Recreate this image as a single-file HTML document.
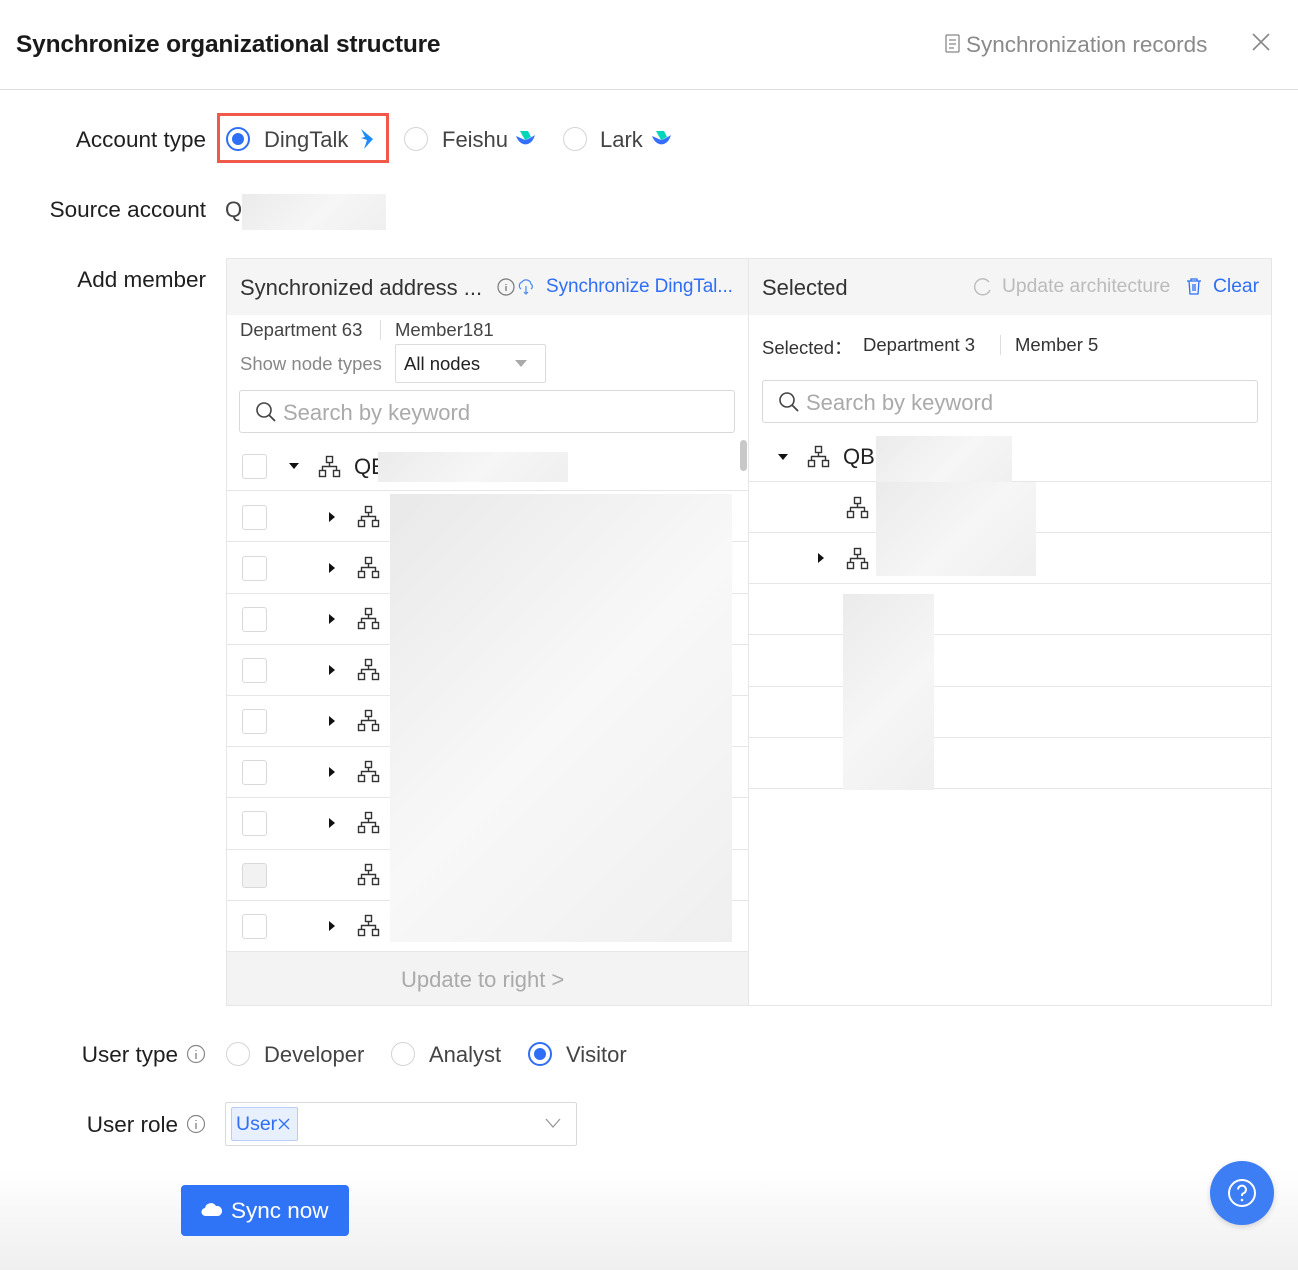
<!DOCTYPE html>
<html><head><meta charset="utf-8"><style>
*{box-sizing:border-box;margin:0;padding:0}
body{width:1298px;height:1270px;position:relative;background:#fff;font-family:"Liberation Sans",Arial,sans-serif;color:#262626;overflow:hidden}
.a{position:absolute;white-space:nowrap}
.lbl{font-size:22.5px;color:#1f1f1f;text-align:right}
.radio{position:absolute;width:24px;height:24px;border:1px solid #d4d4d4;border-radius:50%;background:#fff}
.radio.on{border:2px solid #2f6ff5}
.radio.on::after{content:"";position:absolute;left:4px;top:4px;width:12px;height:12px;border-radius:50%;background:#2f6ff5}
.cb{position:absolute;width:25px;height:25px;border:1px solid #d9d9d9;border-radius:3px;background:#fff}
.hl{position:absolute;height:1px;background:#e6e6e6}
.tri{position:absolute;width:0;height:0;border-left:6px solid #111;border-top:5px solid transparent;border-bottom:5px solid transparent}
.trid{position:absolute;width:0;height:0;border-top:6px solid #111;border-left:5px solid transparent;border-right:5px solid transparent}
.blur{position:absolute;background:linear-gradient(135deg,#ebebeb,#f6f6f6 55%,#efefef)}
</style></head><body>
<div class="a" style="left:16px;top:31px;font-size:24.5px;font-weight:bold;color:#1a1a1a;letter-spacing:-0.2px">Synchronize organizational structure</div>
<svg class="a" style="left:944px;top:34px" width="18" height="20" viewBox="0 0 18 20"><rect x="2" y="1" width="13" height="17" rx="1" fill="none" stroke="#888" stroke-width="1.3"/><path d="M5 6h7M5 10h7M5 14h5" stroke="#888" stroke-width="1.3"/></svg>
<div class="a" style="left:966px;top:32px;font-size:22.5px;color:#8a8a8a">Synchronization records</div>
<svg class="a" style="left:1252px;top:33px" width="18" height="18"><path d="M1 1L17 17M17 1L1 17" stroke="#888" stroke-width="1.6"/></svg>
<div class="hl" style="left:0;top:89px;width:1298px;background:#dedede"></div>

<div class="a lbl" style="right:1092px;top:127px">Account type</div>
<div class="a" style="left:217px;top:113px;width:172px;height:50px;border:3px solid #f0584a"></div>
<div class="radio on" style="left:226px;top:127px"></div>
<div class="a" style="left:264px;top:127px;font-size:22px;color:#444">DingTalk</div>
<svg class="a" style="left:359px;top:128px" width="16" height="22" viewBox="0 0 16 22"><path d="M2 1L14 11L5 21L8 12L2 10L6 9Z" fill="#1d8cf8"/></svg>
<div class="radio" style="left:404px;top:127px"></div>
<div class="a" style="left:442px;top:127px;font-size:22px;color:#444">Feishu</div>
<svg class="a" style="left:514px;top:130px" width="22" height="18" viewBox="0 0 22 18"><path d="M2 6Q6 16 14 14Q19 12 21 5Q15 9 11 10Z" fill="#3370ff"/><path d="M6 1H14L17 7Q13 9 11 10Z" fill="#00d6b9"/></svg>
<div class="radio" style="left:563px;top:127px"></div>
<div class="a" style="left:600px;top:127px;font-size:22px;color:#444">Lark</div>
<svg class="a" style="left:650px;top:130px" width="22" height="18" viewBox="0 0 22 18"><path d="M2 6Q6 16 14 14Q19 12 21 5Q15 9 11 10Z" fill="#3370ff"/><path d="M6 1H14L17 7Q13 9 11 10Z" fill="#00d6b9"/></svg>

<div class="a lbl" style="right:1092px;top:197px">Source account</div>
<div class="a" style="left:225px;top:197px;font-size:22px;color:#444">Q</div>
<div class="blur" style="left:242px;top:194px;width:144px;height:36px"></div>

<div class="a lbl" style="right:1092px;top:267px">Add member</div>

<div class="a" style="left:226px;top:258px;width:523px;height:748px;border:1px solid #e6e6e6"></div>
<div class="a" style="left:227px;top:259px;width:521px;height:56px;background:#f5f5f5"></div>
<div class="a" style="left:240px;top:275px;font-size:22px;color:#333">Synchronized address ...</div>
<svg class="a" style="left:497px;top:277px" width="40" height="20"><circle cx="9" cy="10" r="8" fill="none" stroke="#777" stroke-width="1.2"/><path d="M9 7v1M9 9v5" stroke="#777" stroke-width="1.3"/><path d="M24 12a4 4 0 0 1 1-7a5 5 0 0 1 9 2a3 3 0 0 1 0 5M29 9v8M27 15l2 2 2-2" fill="none" stroke="#4a8af4" stroke-width="1.2"/></svg>
<div class="a" style="left:546px;top:276px;font-size:19px;color:#2f6ff5;letter-spacing:-0.1px">Synchronize DingTal...</div>
<div class="a" style="left:240px;top:319px;font-size:18.5px;color:#444">Department 63</div>
<div class="a" style="left:380px;top:320px;width:1px;height:20px;background:#ddd"></div>
<div class="a" style="left:395px;top:319px;font-size:18.5px;color:#444">Member181</div>
<div class="a" style="left:240px;top:353px;font-size:18.5px;color:#888">Show node types</div>
<div class="a" style="left:395px;top:344px;width:151px;height:39px;border:1px solid #dcdcdc;border-radius:2px"></div>
<div class="a" style="left:404px;top:353px;font-size:18.5px;color:#222">All nodes</div>
<div class="trid" style="left:515px;top:360px;border-top-color:#aaa;border-left-width:6px;border-right-width:6px;border-top-width:7px"></div>
<div class="a" style="left:239px;top:390px;width:496px;height:43px;border:1px solid #d9d9d9;border-radius:3px"></div>
<svg class="a" style="left:255px;top:401px" width="22" height="22"><circle cx="9" cy="9" r="7" fill="none" stroke="#444" stroke-width="1.6"/><path d="M14 14l6 6" stroke="#444" stroke-width="1.8"/></svg>
<div class="a" style="left:283px;top:400px;font-size:22px;color:#aaa">Search by keyword</div>
<div class="a" style="left:740px;top:440px;width:7px;height:31px;border-radius:4px;background:#c8c8c8"></div>

<div class="cb" style="left:242px;top:454px"></div>
<div class="trid" style="left:289px;top:463px"></div>
<svg class="a" style="left:318px;top:455px" width="24" height="24" viewBox="0 0 24 24"><g fill="none" stroke="#333" stroke-width="1.4"><rect x="8.5" y="1.5" width="6" height="6"/><rect x="1.5" y="15.5" width="6" height="6"/><rect x="15.5" y="15.5" width="6" height="6"/><path d="M11.5 7.5v4M4.5 15.5v-4h14v4"/></g></svg>
<div class="a" style="left:354px;top:454px;font-size:22px;color:#222">QE</div>
<div class="blur" style="left:378px;top:452px;width:190px;height:30px"></div>

<div class="hl" style="left:227px;top:490px;width:521px"></div>
<div class="hl" style="left:227px;top:541px;width:521px"></div>
<div class="hl" style="left:227px;top:593px;width:521px"></div>
<div class="hl" style="left:227px;top:644px;width:521px"></div>
<div class="hl" style="left:227px;top:695px;width:521px"></div>
<div class="hl" style="left:227px;top:746px;width:521px"></div>
<div class="hl" style="left:227px;top:797px;width:521px"></div>
<div class="hl" style="left:227px;top:849px;width:521px"></div>
<div class="hl" style="left:227px;top:900px;width:521px"></div>
<div class="hl" style="left:227px;top:951px;width:521px"></div>

<div id="rows"></div>
<div class="blur" style="left:390px;top:494px;width:342px;height:448px;background:linear-gradient(135deg,#e9e9e9,#f8f8f8 50%,#efefef)"></div>

<div class="a" style="left:227px;top:952px;width:521px;height:53px;background:#f3f3f3"></div>
<div class="a" style="left:401px;top:967px;font-size:22px;color:#aaa">Update to right &gt;</div>

<div class="a" style="left:749px;top:258px;width:523px;height:748px;border:1px solid #e6e6e6;border-left:none"></div>
<div class="a" style="left:749px;top:259px;width:522px;height:56px;background:#f5f5f5"></div>
<div class="a" style="left:762px;top:275px;font-size:22px;color:#333">Selected</div>
<svg class="a" style="left:973px;top:277px" width="20" height="20"><path d="M16 5A8 8 0 1 0 17 13" fill="none" stroke="#bbb" stroke-width="1.4"/></svg>
<div class="a" style="left:1002px;top:276px;font-size:19.3px;color:#bbb">Update architecture</div>
<svg class="a" style="left:1186px;top:277px" width="16" height="18"><path d="M1 4h14M5 4V2h6v2M3 4l1 13h8l1-13M7 7v7M9 7v7" fill="none" stroke="#2f6ff5" stroke-width="1.3"/></svg>
<div class="a" style="left:1213px;top:276px;font-size:19.3px;color:#2f6ff5">Clear</div>
<div class="a" style="left:762px;top:334px;font-size:18.5px;color:#333">Selected：</div>
<div class="a" style="left:863px;top:334px;font-size:18.5px;color:#333">Department 3</div>
<div class="a" style="left:1000px;top:335px;width:1px;height:20px;background:#ddd"></div>
<div class="a" style="left:1015px;top:334px;font-size:18.5px;color:#333">Member 5</div>
<div class="a" style="left:762px;top:380px;width:496px;height:43px;border:1px solid #d9d9d9;border-radius:3px"></div>
<svg class="a" style="left:778px;top:391px" width="22" height="22"><circle cx="9" cy="9" r="7" fill="none" stroke="#444" stroke-width="1.6"/><path d="M14 14l6 6" stroke="#444" stroke-width="1.8"/></svg>
<div class="a" style="left:806px;top:390px;font-size:22px;color:#aaa">Search by keyword</div>
<div class="trid" style="left:778px;top:454px"></div>
<svg class="a" style="left:807px;top:445px" width="24" height="24" viewBox="0 0 24 24"><g fill="none" stroke="#333" stroke-width="1.4"><rect x="8.5" y="1.5" width="6" height="6"/><rect x="1.5" y="15.5" width="6" height="6"/><rect x="15.5" y="15.5" width="6" height="6"/><path d="M11.5 7.5v4M4.5 15.5v-4h14v4"/></g></svg>
<div class="a" style="left:843px;top:444px;font-size:22px;color:#222">QB</div>
<svg class="a" style="left:846px;top:496px" width="24" height="24" viewBox="0 0 24 24"><g fill="none" stroke="#333" stroke-width="1.4"><rect x="8.5" y="1.5" width="6" height="6"/><rect x="1.5" y="15.5" width="6" height="6"/><rect x="15.5" y="15.5" width="6" height="6"/><path d="M11.5 7.5v4M4.5 15.5v-4h14v4"/></g></svg>
<div class="tri" style="left:818px;top:553px"></div>
<svg class="a" style="left:846px;top:547px" width="24" height="24" viewBox="0 0 24 24"><g fill="none" stroke="#333" stroke-width="1.4"><rect x="8.5" y="1.5" width="6" height="6"/><rect x="1.5" y="15.5" width="6" height="6"/><rect x="15.5" y="15.5" width="6" height="6"/><path d="M11.5 7.5v4M4.5 15.5v-4h14v4"/></g></svg>
<div class="hl" style="left:749px;top:481px;width:522px"></div>
<div class="hl" style="left:749px;top:532px;width:522px"></div>
<div class="hl" style="left:749px;top:583px;width:522px"></div>
<div class="hl" style="left:749px;top:634px;width:522px"></div>
<div class="hl" style="left:749px;top:686px;width:522px"></div>
<div class="hl" style="left:749px;top:737px;width:522px"></div>
<div class="hl" style="left:749px;top:788px;width:522px"></div>
<div class="blur" style="left:876px;top:436px;width:136px;height:50px"></div>
<div class="blur" style="left:876px;top:482px;width:160px;height:94px"></div>
<div class="blur" style="left:843px;top:594px;width:91px;height:196px"></div>

<div class="a lbl" style="right:1120px;top:1042px">User type</div>
<svg class="a" style="left:186px;top:1044px" width="20" height="20"><circle cx="10" cy="10" r="8.5" fill="none" stroke="#888" stroke-width="1.2"/><path d="M10 6v1M10 9v6" stroke="#888" stroke-width="1.4"/></svg>
<div class="radio" style="left:226px;top:1042px"></div>
<div class="a" style="left:264px;top:1042px;font-size:22px;color:#444">Developer</div>
<div class="radio" style="left:391px;top:1042px"></div>
<div class="a" style="left:429px;top:1042px;font-size:22px;color:#444">Analyst</div>
<div class="radio on" style="left:528px;top:1042px"></div>
<div class="a" style="left:566px;top:1042px;font-size:22px;color:#444">Visitor</div>

<div class="a lbl" style="right:1120px;top:1112px">User role</div>
<svg class="a" style="left:186px;top:1114px" width="20" height="20"><circle cx="10" cy="10" r="8.5" fill="none" stroke="#888" stroke-width="1.2"/><path d="M10 6v1M10 9v6" stroke="#888" stroke-width="1.4"/></svg>
<div class="a" style="left:225px;top:1102px;width:352px;height:44px;border:1px solid #d9d9d9;border-radius:2px"></div>
<div class="a" style="left:231px;top:1107px;width:67px;height:34px;background:#e8f0fe;border:1px solid #b7cdfa;border-radius:2px"></div>
<div class="a" style="left:236px;top:1113px;font-size:19.5px;color:#2f6ff5">User</div>
<svg class="a" style="left:278px;top:1118px" width="12" height="12"><path d="M1 1l10 10M11 1L1 11" stroke="#2f6ff5" stroke-width="1.3"/></svg>
<svg class="a" style="left:545px;top:1117px" width="16" height="12"><path d="M1 2l7 8 7-8" fill="none" stroke="#999" stroke-width="1.3"/></svg>

<div class="a" style="left:0;top:1170px;width:1298px;height:100px;background:linear-gradient(#fff,#efefef)"></div>
<div class="a" style="left:181px;top:1185px;width:168px;height:51px;background:#2f73f6;border-radius:4px"></div>
<svg class="a" style="left:201px;top:1200px" width="22" height="18"><path d="M5 16a4 4 0 0 1-1-8a6 6 0 0 1 11-2a5 5 0 0 1 2 10Z" fill="#fff"/></svg>
<div class="a" style="left:231px;top:1198px;font-size:22.5px;color:#fff">Sync now</div>
<div class="a" style="left:1210px;top:1161px;width:64px;height:64px;border-radius:50%;background:#3d7ef5;box-shadow:0 2px 6px rgba(0,0,0,.15)"></div>
<svg class="a" style="left:1226px;top:1177px" width="32" height="32"><circle cx="16" cy="16" r="13" fill="none" stroke="#fff" stroke-width="2"/><path d="M12 12.5a4 4 0 1 1 5 4c-1 .4-1 1-1 2.5" fill="none" stroke="#fff" stroke-width="2"/><circle cx="16" cy="23" r="1.3" fill="#fff"/></svg>

<script>
var ys=[517,568,619,670,721,772,823,875,926],h='';
var ic='<g fill="none" stroke="#333" stroke-width="1.4"><rect x="8.5" y="1.5" width="6" height="6"/><rect x="1.5" y="15.5" width="6" height="6"/><rect x="15.5" y="15.5" width="6" height="6"/><path d="M11.5 7.5v4M4.5 15.5v-4h14v4"/></g>';
ys.forEach(function(y,i){
 h+='<div class="cb" style="left:242px;top:'+(y-12)+'px;'+(i==7?'background:#f2f2f2':'')+'"></div>';
 if(i!=7)h+='<div class="tri" style="left:329px;top:'+(y-5)+'px"></div>';
 h+='<svg class="a" style="left:357px;top:'+(y-12)+'px" width="24" height="24" viewBox="0 0 24 24">'+ic+'</svg>';
});
document.getElementById('rows').innerHTML=h;
</script>
</body></html>
